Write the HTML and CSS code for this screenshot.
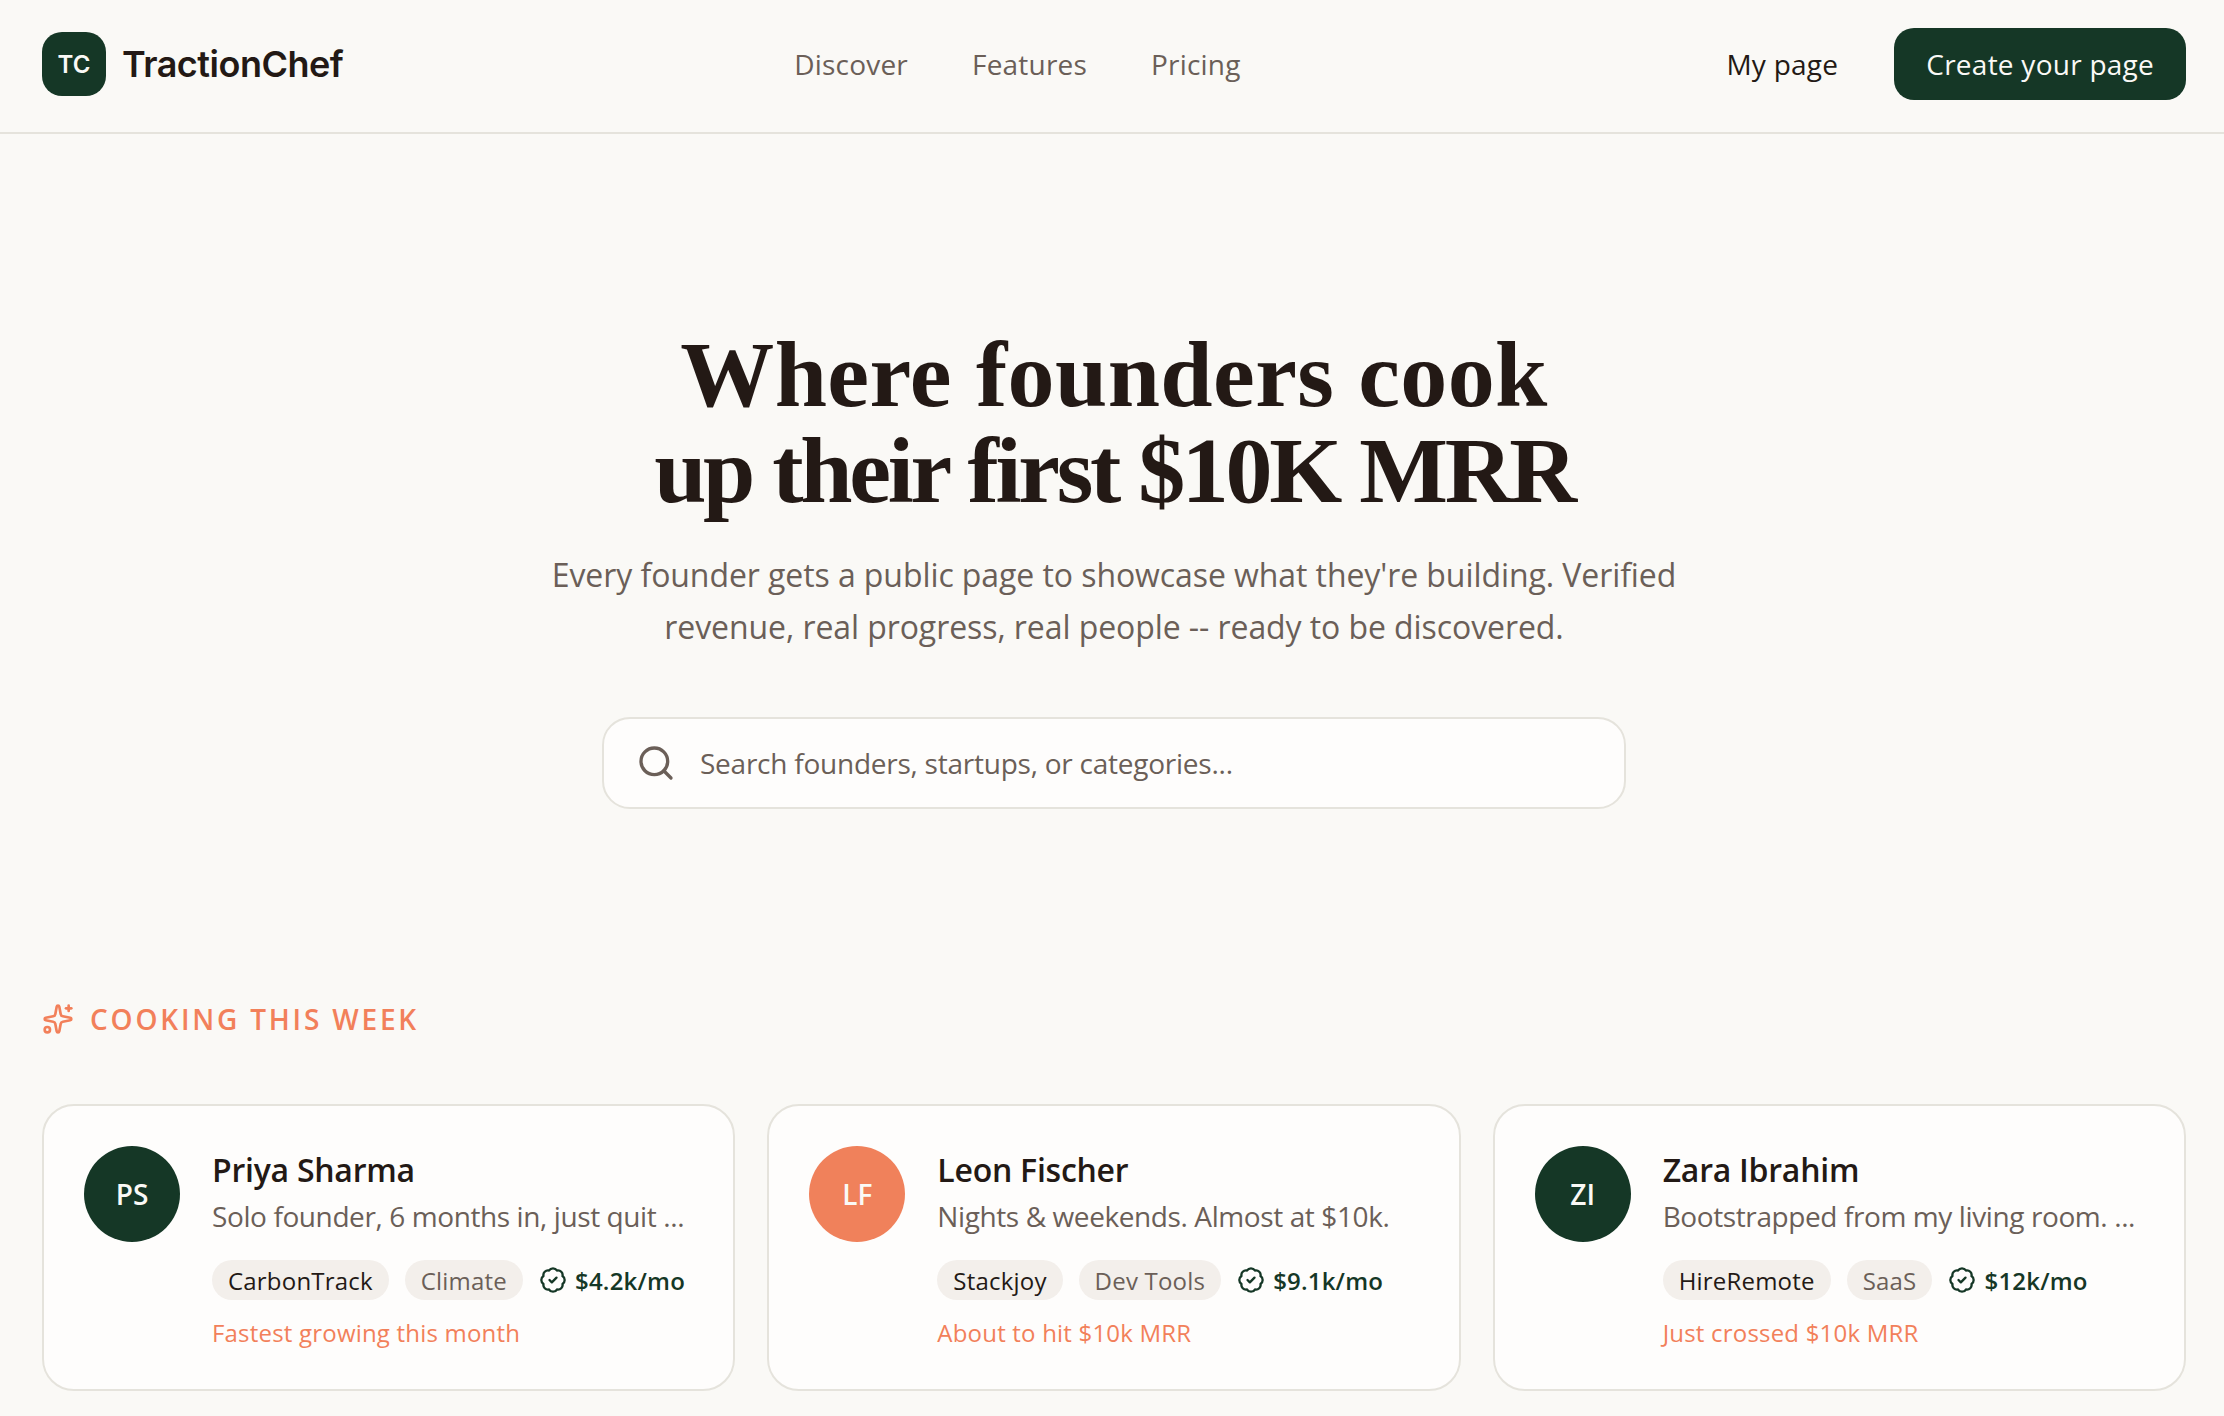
FILE: index.html
```html
<!DOCTYPE html>
<html lang="en">
<head>
    <meta charset="UTF-8">
    <meta name="viewport" content="width=device-width, initial-scale=1.0">
    <title>TractionChef</title>
    <link rel="stylesheet" href="styles.css">
</head>
<body>
    <nav class="navbar">
        <a class="brand" href="#">
            <span class="brand-mark">TC</span>
            <span class="brand-name">TractionChef</span>
        </a>
        <div class="nav-links">
            <a href="#">Discover</a>
            <a href="#">Features</a>
            <a href="#">Pricing</a>
        </div>
        <div class="nav-actions">
            <a class="my-page" href="#">My page</a>
            <a class="cta" href="#">Create your page</a>
        </div>
    </nav>

    <section class="hero">
        <h1><span class="line-one">Where founders cook</span><span class="line-two">up their first $10K MRR</span></h1>
        <p class="subtitle">Every founder gets a public page to showcase what they're building. Verified<br>revenue, real progress, real people -- ready to be discovered.</p>
        <label class="search">
            <svg class="search-icon" viewBox="0 0 24 24"><path d="m21 21-4.34-4.34"/><circle cx="11" cy="11" r="8"/></svg>
            <input type="text" placeholder="Search founders, startups, or categories...">
        </label>
    </section>

    <section class="cooking">
        <h2 class="section-title">
            <svg class="sparkle" viewBox="0 0 24 24"><path d="M11.017 2.814a1 1 0 0 1 1.966 0l1.051 5.558a2 2 0 0 0 1.594 1.594l5.558 1.051a1 1 0 0 1 0 1.966l-5.558 1.051a2 2 0 0 0-1.594 1.594l-1.051 5.558a1 1 0 0 1-1.966 0l-1.051-5.558a2 2 0 0 0-1.594-1.594l-5.558-1.051a1 1 0 0 1 0-1.966l5.558-1.051a2 2 0 0 0 1.594-1.594z"/><path d="M20 2v4"/><path d="M22 4h-4"/><circle cx="4" cy="20" r="2"/></svg>
            COOKING THIS WEEK
        </h2>
        <div class="cards">
            <article class="card">
                <div class="avatar">PS</div>
                <div class="card-body">
                    <h3>Priya Sharma</h3>
                    <p class="bio">Solo founder, 6 months in, just quit ...</p>
                    <div class="meta">
                        <span class="pill">CarbonTrack</span>
                        <span class="pill pill-muted">Climate</span>
                        <span class="mrr"><svg viewBox="0 0 24 24"><path d="M3.85 8.62a4 4 0 0 1 4.78-4.77 4 4 0 0 1 6.74 0 4 4 0 0 1 4.78 4.78 4 4 0 0 1 0 6.74 4 4 0 0 1-4.77 4.78 4 4 0 0 1-6.75 0 4 4 0 0 1-4.78-4.77 4 4 0 0 1 0-6.76Z"/><path d="m9 12 2 2 4-4"/></svg>$4.2k/mo</span>
                    </div>
                    <p class="note">Fastest growing this month</p>
                </div>
            </article>
            <article class="card">
                <div class="avatar avatar-orange">LF</div>
                <div class="card-body">
                    <h3>Leon Fischer</h3>
                    <p class="bio">Nights &amp; weekends. Almost at $10k.</p>
                    <div class="meta">
                        <span class="pill">Stackjoy</span>
                        <span class="pill pill-muted">Dev Tools</span>
                        <span class="mrr"><svg viewBox="0 0 24 24"><path d="M3.85 8.62a4 4 0 0 1 4.78-4.77 4 4 0 0 1 6.74 0 4 4 0 0 1 4.78 4.78 4 4 0 0 1 0 6.74 4 4 0 0 1-4.77 4.78 4 4 0 0 1-6.75 0 4 4 0 0 1-4.78-4.77 4 4 0 0 1 0-6.76Z"/><path d="m9 12 2 2 4-4"/></svg>$9.1k/mo</span>
                    </div>
                    <p class="note">About to hit $10k MRR</p>
                </div>
            </article>
            <article class="card">
                <div class="avatar">ZI</div>
                <div class="card-body">
                    <h3>Zara Ibrahim</h3>
                    <p class="bio">Bootstrapped from my living room. ...</p>
                    <div class="meta">
                        <span class="pill">HireRemote</span>
                        <span class="pill pill-muted">SaaS</span>
                        <span class="mrr"><svg viewBox="0 0 24 24"><path d="M3.85 8.62a4 4 0 0 1 4.78-4.77 4 4 0 0 1 6.74 0 4 4 0 0 1 4.78 4.78 4 4 0 0 1 0 6.74 4 4 0 0 1-4.77 4.78 4 4 0 0 1-6.75 0 4 4 0 0 1-4.78-4.77 4 4 0 0 1 0-6.76Z"/><path d="m9 12 2 2 4-4"/></svg>$12k/mo</span>
                    </div>
                    <p class="note">Just crossed $10k MRR</p>
                </div>
            </article>
        </div>
    </section>
</body>
</html>
```

FILE: styles.css
```css
* {
    box-sizing: border-box;
}
html, body {
    height: 1416px;
    overflow: hidden;
}
body {
    margin: 0;
    background-color: #faf9f6;
    color: #231915;
    font-family: "Open Sans", "Noto Sans", sans-serif;
}
a {
    color: inherit;
    text-decoration: none;
}
svg {
    fill: none;
    stroke: currentColor;
    stroke-width: 2;
    stroke-linecap: round;
    stroke-linejoin: round;
    flex-shrink: 0;
}

/* nav */
.navbar {
    display: flex;
    align-items: center;
    height: 134px;
    padding: 0 38px 4px 42px;
    border-bottom: 2px solid #e5e3dc;
}
.brand {
    display: flex;
    align-items: center;
    gap: 16px;
}
.brand-mark {
    display: flex;
    align-items: center;
    justify-content: center;
    width: 64px;
    height: 64px;
    border-radius: 20px;
    background-color: #153726;
    color: #faf9f6;
    font-family: Inter, sans-serif;
    font-size: 24px;
    font-weight: 600;
}
.brand-name {
    font-family: Inter, sans-serif;
    font-size: 36px;
    font-weight: 600;
    letter-spacing: -0.5px;
}
.nav-links {
    display: flex;
    gap: 64px;
    margin-left: 451px;
    color: #6b5f58;
    font-size: 28px;
    letter-spacing: 0.2px;
}
.nav-actions {
    display: flex;
    align-items: center;
    gap: 56px;
    margin-left: auto;
    font-size: 28px;
    letter-spacing: 0.25px;
}
.cta {
    display: flex;
    align-items: center;
    height: 72px;
    padding: 0 32px;
    border-radius: 20px;
    background-color: #153726;
    color: #faf9f6;
}

/* hero */
.hero {
    display: flex;
    flex-direction: column;
    align-items: center;
    padding: 192px 0 0 4px;
}
h1 {
    margin: 0;
    font-family: "Liberation Serif", serif;
    font-size: 94px;
    font-weight: 700;
    line-height: 96px;
    text-align: center;
}
h1 span {
    display: block;
}
.line-one {
    letter-spacing: 0.4px;
}
.line-two {
    letter-spacing: -3.3px;
}
.subtitle {
    margin: 31px 0 0;
    color: #6b5f58;
    font-size: 32px;
    letter-spacing: -0.08px;
    line-height: 52px;
    text-align: center;
}
.search {
    display: flex;
    align-items: center;
    gap: 22px;
    width: 1024px;
    height: 92px;
    margin-top: 64px;
    padding: 0 32px;
    border: 2px solid #e5e3dc;
    border-radius: 28px;
    background-color: #fefdfc;
}
.search-icon {
    width: 40px;
    height: 40px;
    color: #6b5f58;
}
.search input {
    flex: 1;
    border: none;
    outline: none;
    background: none;
    font-family: inherit;
    font-size: 28px;
    letter-spacing: -0.24px;
    color: #231915;
}
.search input::placeholder {
    color: #6b5f58;
    opacity: 1;
}

/* cooking this week */
.cooking {
    padding: 0 38px 0 42px;
}
.section-title {
    display: flex;
    align-items: center;
    gap: 16px;
    margin: 191px 0 0;
    color: #f2805a;
    font-size: 28px;
    font-weight: 600;
    letter-spacing: 2.8px;
}
.sparkle {
    width: 32px;
    height: 32px;
}
.cards {
    display: grid;
    grid-template-columns: repeat(3, minmax(0, 1fr));
    gap: 32px;
    margin-top: 66px;
}
.card {
    display: flex;
    gap: 32px;
    height: 287px;
    padding: 40px;
    border: 2px solid #e5e3dc;
    border-radius: 32px;
    background-color: #fefdfc;
}
.avatar {
    display: flex;
    align-items: center;
    justify-content: center;
    width: 96px;
    height: 96px;
    border-radius: 50%;
    background-color: #153726;
    color: #faf9f6;
    font-size: 28px;
    font-weight: 600;
    flex-shrink: 0;
}
.avatar-orange {
    background-color: #f0815b;
}
.card-body {
    min-width: 0;
}
h3 {
    margin: 3px 0 0;
    font-size: 32px;
    font-weight: 600;
    letter-spacing: -0.25px;
    line-height: 42px;
}
.bio {
    margin: 5px 0 0;
    color: #6b5f58;
    font-size: 28px;
    letter-spacing: -0.4px;
    line-height: 40px;
    white-space: nowrap;
}
.meta {
    display: flex;
    align-items: center;
    gap: 16px;
    margin-top: 24px;
    font-size: 24px;
    letter-spacing: 0.2px;
}
.pill {
    display: flex;
    align-items: center;
    height: 40px;
    padding: 0 16px;
    border-radius: 20px;
    background-color: #f3efeb;
}
.pill-muted {
    color: #6b5f58;
}
.mrr {
    display: flex;
    align-items: center;
    gap: 8px;
    color: #153726;
    font-weight: 600;
}
.mrr svg {
    width: 28px;
    height: 28px;
}
.note {
    margin: 15px 0 0;
    color: #f2805a;
    font-size: 24px;
    letter-spacing: 0.2px;
    line-height: 36px;
}
```
